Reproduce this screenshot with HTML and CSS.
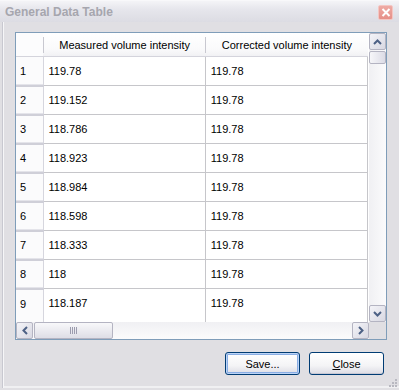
FILE: index.html
```html
<!DOCTYPE html>
<html lang="en">
<head>
    <meta charset="UTF-8">
    <title>General Data Table</title>
    <link rel="stylesheet" href="styles.css">
</head>
<body>
    <div class="window">
        <div class="titlebar">
            <span class="title">General Data Table</span>
            <span class="close-btn">
                <svg width="10" height="9" viewBox="0 0 10 9"><path d="M1.5 1 L8.5 8 M8.5 1 L1.5 8" stroke="#fff" stroke-width="2"/></svg>
            </span>
        </div>

        <div class="body">
            <div class="grid-frame">
                <div class="grid-main">
                    <div class="viewport">
                        <table class="grid">
                            <colgroup>
                                <col class="c-rowhead">
                                <col class="c-data">
                                <col class="c-data">
                            </colgroup>
                            <thead>
                                <tr>
                                    <th class="corner"></th>
                                    <th><span>Measured volume intensity</span></th>
                                    <th><span>Corrected volume intensity</span></th>
                                </tr>
                            </thead>
                            <tbody>
                                <tr><td class="rowhead">1</td><td>119.78</td><td>119.78</td></tr>
                                <tr><td class="rowhead">2</td><td>119.152</td><td>119.78</td></tr>
                                <tr><td class="rowhead">3</td><td>118.786</td><td>119.78</td></tr>
                                <tr><td class="rowhead">4</td><td>118.923</td><td>119.78</td></tr>
                                <tr><td class="rowhead">5</td><td>118.984</td><td>119.78</td></tr>
                                <tr><td class="rowhead">6</td><td>118.598</td><td>119.78</td></tr>
                                <tr><td class="rowhead">7</td><td>118.333</td><td>119.78</td></tr>
                                <tr><td class="rowhead">8</td><td>118</td><td>119.78</td></tr>
                                <tr class="last"><td class="rowhead">9</td><td>118.187</td><td>119.78</td></tr>
                            </tbody>
                        </table>
                    </div>
                    <div class="vscroll">
                        <span class="sb-btn">
                            <svg width="9" height="6" viewBox="0 0 9 6"><path d="M1 5 L4.5 1.5 L8 5" fill="none" stroke="#4d6185" stroke-width="2"/></svg>
                        </span>
                        <span class="v-thumb"></span>
                        <span class="v-track"></span>
                        <span class="sb-btn">
                            <svg width="9" height="6" viewBox="0 0 9 6"><path d="M1 1 L4.5 4.5 L8 1" fill="none" stroke="#4d6185" stroke-width="2"/></svg>
                        </span>
                    </div>
                </div>
                <div class="hscroll-row">
                    <div class="hscroll">
                        <span class="sb-btn">
                            <svg width="6" height="9" viewBox="0 0 6 9"><path d="M5 1 L1.5 4.5 L5 8" fill="none" stroke="#4d6185" stroke-width="2"/></svg>
                        </span>
                        <span class="h-thumb">
                            <span class="grip-lines"></span>
                        </span>
                        <span class="h-track"></span>
                        <span class="sb-btn">
                            <svg width="6" height="9" viewBox="0 0 6 9"><path d="M1 1 L4.5 4.5 L1 8" fill="none" stroke="#4d6185" stroke-width="2"/></svg>
                        </span>
                    </div>
                    <div class="sb-corner"></div>
                </div>
            </div>

            <div class="button-row">
                <button class="btn default">Save...</button>
                <button class="btn"><u>C</u>lose</button>
            </div>
            <span class="resize-grip">
                <svg width="11" height="11" viewBox="0 0 11 11">
                    <g fill="#b8b8c0">
                        <rect x="8" y="2" width="2" height="2"/>
                        <rect x="5" y="5" width="2" height="2"/>
                        <rect x="8" y="5" width="2" height="2"/>
                        <rect x="2" y="8" width="2" height="2"/>
                        <rect x="5" y="8" width="2" height="2"/>
                        <rect x="8" y="8" width="2" height="2"/>
                    </g>
                </svg>
            </span>
        </div>
    </div>
</body>
</html>
```

FILE: styles.css
```css
body {
    margin: 0;
    font-family: "Liberation Sans", Arial, sans-serif;
    font-size: 11px;
    color: #000;
    background-color: #e0dfe3;
}

.window {
    width: 399px;
    height: 390px;
    display: flex;
    flex-direction: column;
    box-sizing: border-box;
    background-color: #e0dfe3;
}

.titlebar {
    height: 22px;
    flex-shrink: 0;
    display: flex;
    align-items: center;
    justify-content: space-between;
    padding: 0 5px 0 5px;
    box-sizing: border-box;
    background: linear-gradient(#f4f4f7, #e6e6ec 40%, #dcdce3);
    border-top: 1px solid #f8f8fa;
}

.title {
    font-size: 12px;
    font-weight: bold;
    color: #a6a6ae;
    padding-top: 1px;
}

.close-btn {
    width: 13px;
    height: 13px;
    margin-top: 2px;
    margin-right: 1px;
    display: flex;
    align-items: center;
    justify-content: center;
    background: linear-gradient(#eeaaa4, #e69088);
    border: 1px solid #f4c6c2;
    border-radius: 2px;
}

.body {
    flex: 1;
    position: relative;
    border-left: 1px solid #c8c8d0;
    box-shadow: inset 1px 0 0 #f6f6f8, inset 0 -2px 0 #f0f0f2;
    margin-left: 2px;
    margin-bottom: 2px;
    padding: 10px 0 0 12px;
}

.grid-frame {
    width: 372px;
    height: 308px;
    box-sizing: border-box;
    border: 1px solid #7f9db9;
    background-color: #fff;
    display: flex;
    flex-direction: column;
}

.grid-main {
    display: flex;
    height: 289px;
}

.viewport {
    width: 353px;
    overflow: hidden;
}

.grid {
    border-collapse: collapse;
    table-layout: fixed;
    width: 352px;
}

.c-rowhead {
    width: 27px;
}

.c-data {
    width: 162px;
}

.grid th {
    height: 23px;
    padding: 0;
    font-weight: normal;
    text-align: center;
    white-space: nowrap;
    background: linear-gradient(#ffffff, #fafafb 70%, #f1f1f4);
    border-bottom: 1px solid #d4d4dc;
}

.grid th span {
    display: block;
    border-left: 1px solid #c8c8d0;
    margin: 0;
    padding: 2px 0;
}

.grid th.corner {
    background: #fcfcfd;
}

.grid td {
    height: 29px;
    padding: 0 0 0 5px;
    white-space: nowrap;
    border-bottom: 1px solid #c6c6ca;
    border-right: 1px solid #c6c6ca;
    box-sizing: border-box;
}

.grid td.rowhead {
    padding-left: 4px;
    background-color: #fbfbfc;
    border-right: 1px solid #d6d6de;
    border-bottom: 2px solid #cfcfd8;
    box-shadow: inset 0 -1px 0 #e4e4ea;
}

.grid tr.last td {
    height: 40px;
    vertical-align: top;
    padding-top: 8px;
}

.vscroll {
    width: 17px;
    display: flex;
    flex-direction: column;
    background: linear-gradient(90deg, #f0f0f3, #fbfbfc);
}

.sb-btn {
    width: 17px;
    height: 17px;
    box-sizing: border-box;
    display: flex;
    align-items: center;
    justify-content: center;
    border: 1px solid #b4b4c2;
    border-radius: 2px;
    background: linear-gradient(135deg, #f4f4f8, #d8d8e2);
    flex-shrink: 0;
}

.v-thumb {
    height: 11px;
    margin-top: 1px;
    border: 1px solid #b4b4c2;
    border-radius: 2px;
    background: linear-gradient(90deg, #f6f6f9, #dcdce6);
}

.v-track {
    flex: 1;
}

.hscroll-row {
    display: flex;
    height: 17px;
}

.hscroll {
    width: 353px;
    display: flex;
    background: linear-gradient(#f0f0f3, #fbfbfc);
}

.h-thumb {
    width: 79px;
    margin-left: 1px;
    box-sizing: border-box;
    border: 1px solid #b4b4c2;
    border-radius: 2px;
    background: linear-gradient(#f8f8fa, #dedee6);
    display: flex;
    align-items: center;
    justify-content: center;
}

.grip-lines {
    width: 8px;
    height: 7px;
    background: repeating-linear-gradient(90deg, #9c9cae 0 1px, transparent 1px 2px);
}

.h-track {
    flex: 1;
}

.sb-corner {
    flex: 1;
    background-color: #e0dfe3;
}

.button-row {
    display: flex;
    justify-content: flex-end;
    gap: 9px;
    padding: 12px 3px 0 0;
    width: 369px;
}

.btn {
    width: 75px;
    height: 23px;
    padding: 0;
    font-family: "Liberation Sans", Arial, sans-serif;
    font-size: 11px;
    color: #000;
    border: 1px solid #003c74;
    border-radius: 3px;
    background: linear-gradient(#ffffff, #f4f4f6 60%, #dcdce4);
    box-shadow: inset 0 -1px 0 #c8c8d4;
}

.btn.default {
    box-shadow: inset 0 0 0 1px #bcd4f6, inset 0 0 0 2px #89ade4;
}

.resize-grip {
    position: absolute;
    right: 1px;
    bottom: 0;
    display: flex;
}
```
